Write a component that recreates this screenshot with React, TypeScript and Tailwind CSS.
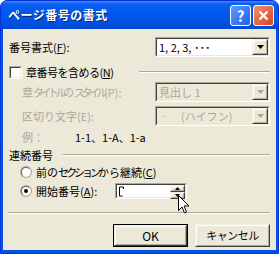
const font = "font-['Noto_Sans_CJK_JP','Liberation_Sans',sans-serif]";

function Sunken({ className = "", children }: { className?: string; children?: React.ReactNode }) {
    return (
        <div className={`border border-t-[#ACA899] border-l-[#ACA899] border-b-white border-r-white ${className}`}>
            <div className="h-full w-full border border-t-[#404040] border-l-[#404040] border-b-[#ECE9D8] border-r-[#ECE9D8] flex">
                {children}
            </div>
        </div>
    );
}

function Raised({ className = "", children }: { className?: string; children?: React.ReactNode }) {
    return (
        <div className={`border border-t-[#F1EFE2] border-l-[#F1EFE2] border-b-[#404040] border-r-[#404040] bg-[#ECE9D8] ${className}`}>
            <div className="h-full w-full border border-t-white border-l-white border-b-[#ACA899] border-r-[#ACA899] flex items-center justify-center">
                {children}
            </div>
        </div>
    );
}

function Combo({ text, disabled }: { text: string; disabled?: boolean }) {
    return (
        <Sunken className="w-[115px] h-[20px] shrink-0">
            <div className={`flex-1 flex items-center pl-[2px] whitespace-nowrap ${disabled ? "bg-[#ECE9D8] text-[#ACA899]" : "bg-white text-black"}`}>
                {text}
            </div>
            <Raised className="w-[16px] h-full">
                <svg width="7" height="4" viewBox="0 0 7 4">
                    <path d="M0 0H7L3.5 4Z" fill={disabled ? "#ACA899" : "#000"} />
                </svg>
            </Raised>
        </Sunken>
    );
}

function Radio({ checked }: { checked?: boolean }) {
    return (
        <div className="w-[12px] h-[12px] shrink-0 rounded-full bg-[#ACA899] p-[1px]">
            <div className="w-full h-full rounded-full bg-white border border-[#716F64] border-b-[#F1EFE2] border-r-[#F1EFE2] flex items-center justify-center">
                {checked && <div className="w-[4px] h-[4px] rounded-full bg-black" />}
            </div>
        </div>
    );
}

function U({ children }: { children: React.ReactNode }) {
    return <span className="underline underline-offset-[1px]">{children}</span>;
}

export default function App() {
    return (
        <div className={`w-[279px] h-[254px] flex flex-col rounded-t-[7px] bg-[#0054E3] border border-[#0831D9] overflow-hidden ${font}`}>
            <div className="h-[28px] shrink-0 flex items-center justify-between pl-[7px] pr-[4px] bg-[linear-gradient(to_bottom,#3D8EF6_0%,#0A5FEF_10%,#0058EE_40%,#0054E3_70%,#0048D6_100%)]">
                <span className="text-white text-[12px] font-bold tracking-[0.5px] [text-shadow:1px_1px_0_#0A1E6A]">
                    ページ番号の書式
                </span>
                <div className="flex gap-[2px]">
                    <div className="w-[21px] h-[21px] rounded-[3px] border border-white bg-[linear-gradient(135deg,#5A9CFF,#2460E0)] flex items-center justify-center text-white font-bold text-[15px] leading-none">
                        ?
                    </div>
                    <div className="w-[21px] h-[21px] rounded-[3px] border border-white bg-[linear-gradient(135deg,#F08F6F,#D8441E)] flex items-center justify-center">
                        <svg width="11" height="11" viewBox="0 0 11 11">
                            <path d="M1.5 1.5L9.5 9.5M9.5 1.5L1.5 9.5" stroke="#fff" strokeWidth="2.2" />
                        </svg>
                    </div>
                </div>
            </div>

            <div className="relative flex-1 mx-[2px] mb-[3px] bg-[#ECE9D8] pl-[5px] pr-[6px] pt-[8px] text-[11px] leading-none text-black whitespace-nowrap">
                <div className="h-[20px] flex items-center justify-between">
                    <span className="pl-[1px]">番号書式(<U>F</U>):</span>
                    <Combo text="1, 2, 3, ･･･" />
                </div>

                <div className="mt-[5px] h-[20px] flex items-center">
                    <Sunken className="w-[13px] h-[13px] ml-[1px] shrink-0">
                        <div className="flex-1 bg-white" />
                    </Sunken>
                    <span className="ml-[4px] tracking-[-0.5px]">章番号を含める(<U>N</U>)</span>
                    <div className="flex-1 ml-[26px] h-[2px] border-t border-t-[#ACA899] border-b border-b-white" />
                </div>

                <div className="h-[20px] flex items-center justify-between text-[#ACA899]">
                    <span className="pl-[14px]">
                        章<span className="tracking-[-3.5px]">タイトル</span>の<span className="tracking-[-3.5px]">スタイル</span>(P):
                    </span>
                    <Combo text="見出し 1" disabled />
                </div>

                <div className="mt-[4px] h-[20px] flex items-center justify-between text-[#ACA899]">
                    <span className="pl-[14px]">区切り文字(E):</span>
                    <Combo text="‐　(ハイフン)" disabled />
                </div>

                <div className="mt-[4px] h-[14px] flex items-center">
                    <span className="pl-[14px] w-[67px] text-[#ACA899]">例：</span>
                    <span>1-1、1-A、1-a</span>
                </div>

                <div className="mt-[3px] h-[16px] flex items-center">
                    <span className="pl-[1px]">連続番号</span>
                    <div className="flex-1 ml-[10px] h-[2px] border-t border-t-[#ACA899] border-b border-b-white" />
                </div>

                <div className="mt-[1px] h-[16px] flex items-center pl-[12px]">
                    <Radio />
                    <span className="ml-[4px]">
                        前の<span className="tracking-[-3px]">セクション</span>から継続(<U>C</U>)
                    </span>
                </div>

                <div className="mt-[3px] h-[16px] flex items-center pl-[12px]">
                    <Radio checked />
                    <span className="ml-[4px] w-[79px]">開始番号(<U>A</U>):</span>
                    <Sunken className="w-[72px] h-[16px]">
                        <div className="flex-1 bg-white flex items-center pl-[2px]">
                            <svg width="5" height="11" viewBox="0 0 5 11">
                                <path d="M0.5 1H4.5V3M0.5 1V10H3.5" stroke="#000" fill="none" />
                            </svg>
                        </div>
                        <div className="w-[15px] flex flex-col">
                            <Raised className="h-[7px]">
                                <svg width="5" height="3" viewBox="0 0 5 3"><path d="M0 3H5L2.5 0Z" fill="#000" /></svg>
                            </Raised>
                            <Raised className="h-[7px]">
                                <svg width="5" height="3" viewBox="0 0 5 3"><path d="M0 0H5L2.5 3Z" fill="#000" /></svg>
                            </Raised>
                        </div>
                    </Sunken>
                </div>

                <div className="mt-[13px] h-[2px] border-t border-t-[#ACA899] border-b border-b-white" />

                <div className="mt-[10px] flex justify-end gap-[7px] text-[12px]">
                    <div className="w-[75px] h-[23px] border border-black">
                        <Raised className="h-full">
                            <span>OK</span>
                        </Raised>
                    </div>
                    <Raised className="w-[75px] h-[23px]">
                        <span className="text-[11px] tracking-[-0.5px]">キャンセル</span>
                    </Raised>
                </div>

                <svg className="absolute left-[175px] top-[166px]" width="12" height="19" viewBox="0 0 12 19">
                    <path d="M0.5 0.5V15.5L4 12L6.5 18L8.5 17L6 11H11Z" fill="#fff" stroke="#000" />
                </svg>
            </div>
        </div>
    );
}
